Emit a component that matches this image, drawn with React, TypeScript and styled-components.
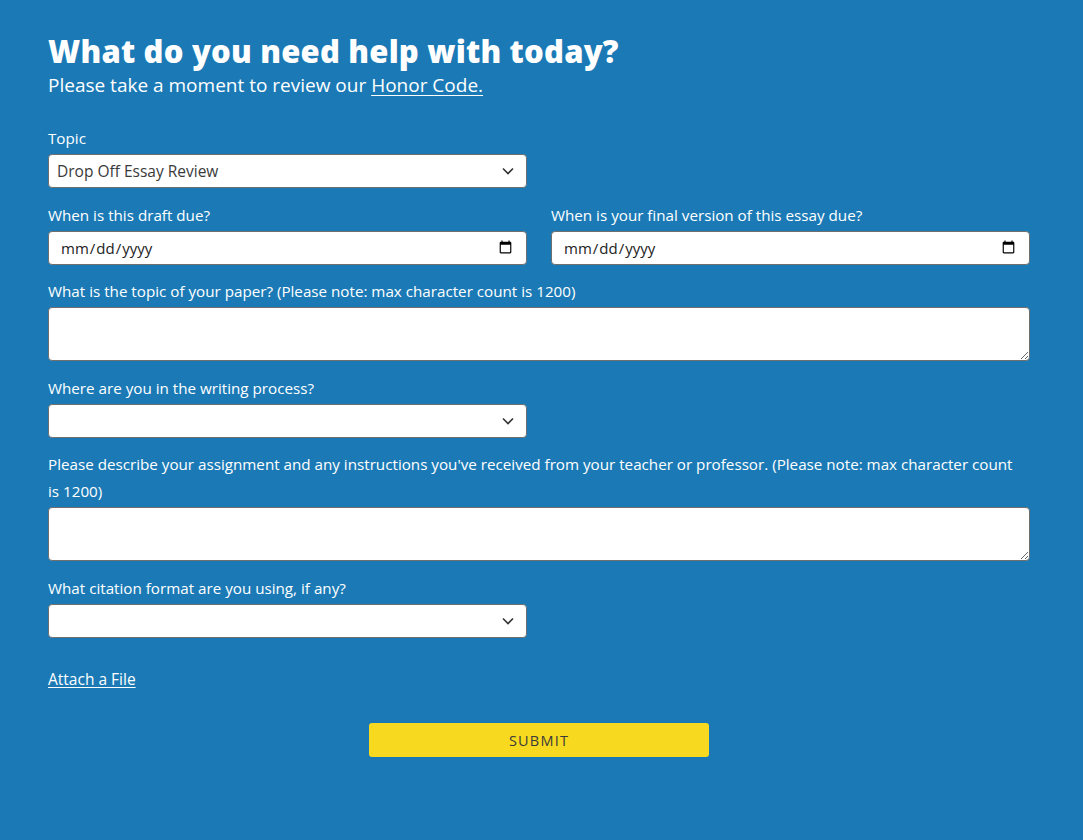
import React from 'react';
import styled, {createGlobalStyle} from 'styled-components';

const GlobalStyle = createGlobalStyle`
  html, body {
    margin: 0;
    padding: 0;
    background: #1b7ab6;
  }
  body {
    font-family: "Open Sans", "Liberation Sans", sans-serif;
    color: #ffffff;
  }
`

const Page = styled.div`
  min-height: 840px;
  padding: 32px 53px 0 48px;
  box-sizing: border-box;
`

const Title = styled.h1`
  margin: 0;
  font-size: 31px;
  line-height: 38px;
  font-weight: 800;
  letter-spacing: 0.2px;
`

const Intro = styled.p`
  margin: 2px 0 27px;
  font-size: 19px;
  line-height: 26px;
`

const WhiteLink = styled.a`
  color: #ffffff;
  text-decoration: underline;
  text-underline-offset: 3px;
`

const Form = styled.form`
  display: flex;
  flex-direction: column;
`

const Row = styled.div`
  display: grid;
  grid-template-columns: 1fr 1fr;
  column-gap: 24px;
`

const Group = styled.div<{half?: boolean}>`
  display: flex;
  flex-direction: column;
  margin-bottom: 13.5px;
  width: ${(p) => (p.half ? 'calc(50% - 12px)' : '100%')};
`

const Label = styled.label`
  font-size: 15.2px;
  line-height: 27px;
  margin-bottom: 2px;
  padding-right: 10px;
`

const fieldBase = `
  box-sizing: border-box;
  width: 100%;
  background: #ffffff;
  border: 1px solid #6f6f6f;
  border-radius: 4px;
  color: #222222;
  font-family: "Open Sans", "Liberation Sans", sans-serif;
  outline: none;
`

const SelectWrap = styled.div`
  position: relative;
`

const Select = styled.select`
  ${fieldBase};
  appearance: none;
  height: 34px;
  padding: 0 32px 0 8px;
  font-size: 15.5px;
  color: #3a3a3a;
`

const Chevron = styled.svg`
  position: absolute;
  right: 13px;
  top: 13px;
  pointer-events: none;
`

const DateInput = styled.input`
  ${fieldBase};
  height: 34px;
  padding: 0 11px;
  font-size: 15px;
`

const TextArea = styled.textarea`
  ${fieldBase};
  height: 54px;
  padding: 6px 8px;
  font-size: 15px;
  resize: vertical;
  display: block;
`

const AttachLink = styled.a`
  margin-top: 18px;
  font-size: 15.5px;
  line-height: 20px;
  color: #ffffff;
  text-decoration: underline;
  text-underline-offset: 2px;
  align-self: flex-start;
`

const SubmitRow = styled.div`
  display: flex;
  justify-content: center;
  margin-top: 34px;
`

const SubmitButton = styled.button`
  width: 340px;
  height: 34px;
  border: none;
  border-radius: 3px;
  background: #f7d920;
  color: #3a3a3a;
  font-family: "Open Sans", "Liberation Sans", sans-serif;
  font-size: 14.5px;
  letter-spacing: 1.2px;
  cursor: pointer;
`

const Caret = () => (
  <Chevron width="12" height="8" viewBox="0 0 12 8">
    <path d="M1 1.5l5 5 5-5" fill="none" stroke="#333" strokeWidth="1.6" />
  </Chevron>
)

type DropdownProps = {
  value?: string
  options: string[]
}

const Dropdown: React.FC<DropdownProps> = ({value, options}) => (
  <SelectWrap>
    <Select defaultValue={value ?? ''}>
      <option value=""></option>
      {options.map((o) => (
        <option key={o} value={o}>{o}</option>
      ))}
    </Select>
    <Caret />
  </SelectWrap>
)

export default function App() {
  return (
    <>
      <GlobalStyle />
      <Page>
        <Title>What do you need help with today?</Title>
        <Intro>
          Please take a moment to review our <WhiteLink href="#">Honor Code.</WhiteLink>
        </Intro>

        <Form onSubmit={(e) => e.preventDefault()}>
          <Group half>
            <Label>Topic</Label>
            <Dropdown
              value="Drop Off Essay Review"
              options={['Drop Off Essay Review', 'Live Tutoring', 'Writing Lab']}
            />
          </Group>

          <Row>
            <Group>
              <Label>When is this draft due?</Label>
              <DateInput type="date" />
            </Group>
            <Group>
              <Label>When is your final version of this essay due?</Label>
              <DateInput type="date" />
            </Group>
          </Row>

          <Group>
            <Label>What is the topic of your paper? (Please note: max character count is 1200)</Label>
            <TextArea maxLength={1200} />
          </Group>

          <Group half>
            <Label>Where are you in the writing process?</Label>
            <Dropdown options={['Brainstorming', 'Outlining', 'First Draft', 'Final Draft']} />
          </Group>

          <Group>
            <Label>
              Please describe your assignment and any instructions you've received from your teacher or professor. (Please note: max character count is 1200)
            </Label>
            <TextArea maxLength={1200} />
          </Group>

          <Group half>
            <Label>What citation format are you using, if any?</Label>
            <Dropdown options={['APA', 'MLA', 'Chicago', 'None']} />
          </Group>

          <AttachLink href="#">Attach a File</AttachLink>

          <SubmitRow>
            <SubmitButton type="submit">SUBMIT</SubmitButton>
          </SubmitRow>
        </Form>
      </Page>
    </>
  )
}
